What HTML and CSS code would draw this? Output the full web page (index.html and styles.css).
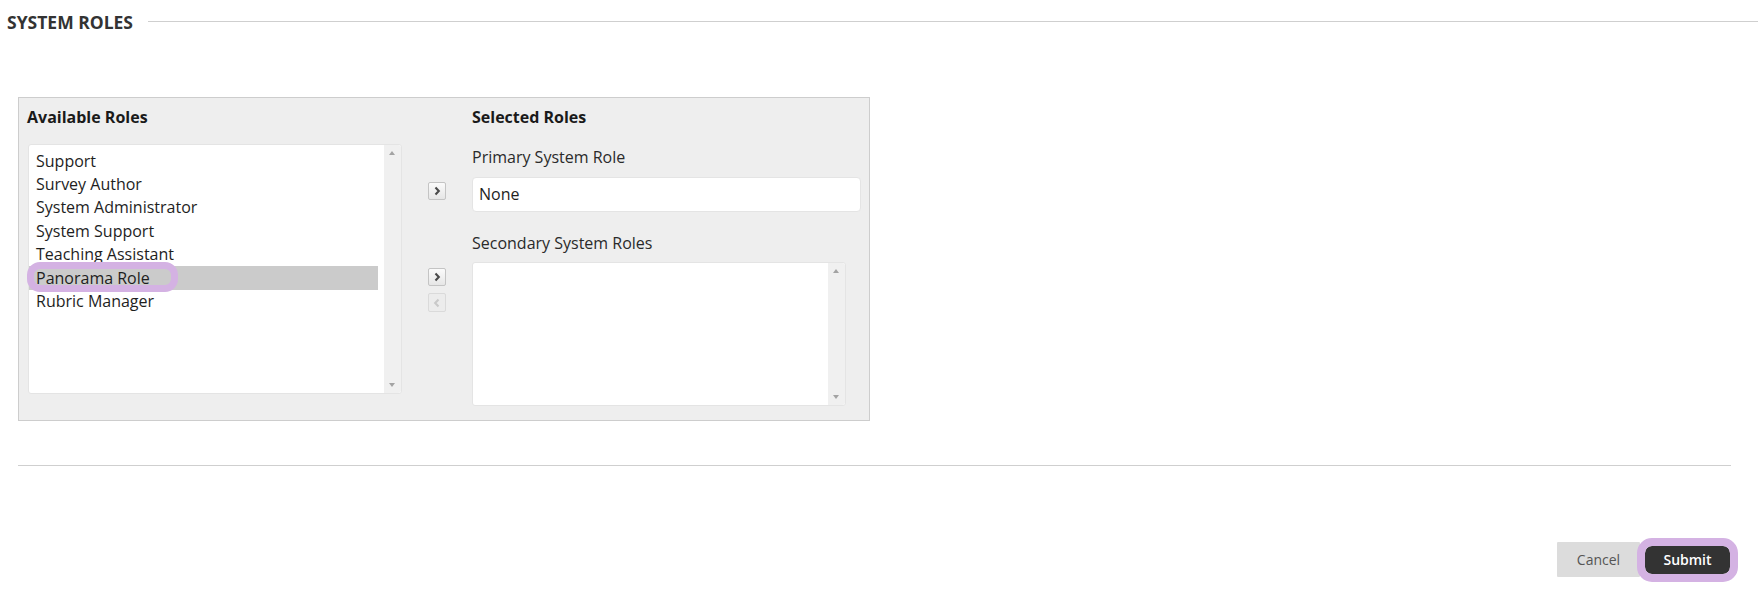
FILE: index.html
```html
<!DOCTYPE html>
<html>
<head>
<meta charset="utf-8">
<link rel="stylesheet" href="styles.css">
</head>
<body>
<div class="section-head">
  <h2 class="section-title">SYSTEM ROLES</h2>
  <div class="section-rule"></div>
</div>

<div class="form">
  <div class="picker">
    <div class="col-left">
      <h3 class="col-title">Available Roles</h3>
      <div class="listbox listbox-avail">
        <ul class="items">
          <li class="item">Support</li>
          <li class="item">Survey Author</li>
          <li class="item">System Administrator</li>
          <li class="item">System Support</li>
          <li class="item">Teaching Assistant</li>
          <li class="item item-selected">Panorama Role<span class="ring ring-item"></span></li>
          <li class="item">Rubric Manager</li>
        </ul>
        <div class="scrollbar">
          <span class="tri tri-up"></span>
          <span class="tri tri-down"></span>
        </div>
      </div>
    </div>

    <div class="col-right">
      <div class="spacer"></div>
      <h3 class="col-title">Selected Roles</h3>

      <div class="spacer"></div>
      <div class="field-label label-primary">Primary System Role</div>

      <div class="arrows arrows-primary">
        <span class="arrow-btn"><svg width="10" height="10" viewBox="0 0 10 10"><path d="M3.5 1.6 L6.8 5 L3.5 8.4" fill="none" stroke="#4a4a4a" stroke-width="2.1"/></svg></span>
      </div>
      <div class="input-box">None</div>

      <div class="spacer"></div>
      <div class="field-label label-secondary">Secondary System Roles</div>

      <div class="arrows arrows-secondary">
        <span class="arrow-btn"><svg width="10" height="10" viewBox="0 0 10 10"><path d="M3.5 1.6 L6.8 5 L3.5 8.4" fill="none" stroke="#4a4a4a" stroke-width="2.1"/></svg></span>
        <span class="arrow-btn arrow-disabled"><svg width="10" height="10" viewBox="0 0 10 10"><path d="M6.5 1.6 L3.2 5 L6.5 8.4" fill="none" stroke="#c9c9c9" stroke-width="2.1"/></svg></span>
      </div>
      <div class="listbox listbox-secondary">
        <ul class="items"></ul>
        <div class="scrollbar">
          <span class="tri tri-up"></span>
          <span class="tri tri-down"></span>
        </div>
      </div>
    </div>
  </div>

  <div class="form-rule"></div>

  <div class="actions">
    <button class="btn btn-cancel">Cancel</button>
    <button class="btn btn-submit">Submit</button>
  </div>
</div>
</body>
</html>
```

FILE: styles.css
```css
* { box-sizing: border-box; }
html, body { margin: 0; padding: 0; background: #fff; }
body {
  font-family: "Open Sans", "Noto Sans", sans-serif;
  color: #262626;
  width: 1758px;
  height: 596px;
  overflow: hidden;
}

.section-head {
  display: flex;
  align-items: center;
  padding: 10px 0 0 7px;
}
.section-title {
  margin: 0;
  font-size: 17.5px;
  line-height: 24px;
  font-weight: 700;
  color: #333;
}
.section-rule {
  flex: 1;
  height: 1px;
  background: #cfcfcf;
  margin-left: 15px;
  margin-top: -2px;
}

.form {
  margin: 63px 27px 0 18px;
}

.picker {
  width: 852px;
  height: 324px;
  background: #eee;
  border: 1px solid #cdcdcd;
  display: flex;
  padding: 8px 0 0 8px;
}

.col-left {
  width: 375px;
  display: flex;
  flex-direction: column;
}
.col-title {
  margin: 0;
  font-size: 16px;
  line-height: 22px;
  font-weight: 700;
  color: #1a1a1a;
}

.listbox {
  background: #fff;
  border: 1px solid #e4e4e4;
  border-radius: 3px;
  display: flex;
  flex-shrink: 0;
}
.listbox-avail {
  margin-top: 16px;
  margin-left: 1px;
  width: 374px;
  height: 250px;
}
.items {
  list-style: none;
  margin: 0;
  padding: 5px 6px 0 0;
  flex: 1;
}
.item {
  position: relative;
  font-size: 16px;
  line-height: 23.2px;
  height: 23.2px;
  padding-left: 7px;
  color: #1e1e1e;
  white-space: nowrap;
}
.item-selected {
  background: #cbcbcb;
  height: 24px;
  line-height: 24px;
}
.ring {
  position: absolute;
  border: 7px solid #d4b2e3;
  pointer-events: none;
}
.ring-item {
  left: -2px;
  top: -4px;
  width: 151px;
  height: 30px;
  border-radius: 13px;
}

.scrollbar {
  width: 17px;
  background: #f0f0f0;
  position: relative;
  border-radius: 0 3px 3px 0;
}
.tri {
  position: absolute;
  left: 5px;
  width: 0;
  height: 0;
  border-left: 3.5px solid transparent;
  border-right: 3.5px solid transparent;
}
.tri-up { top: 6px; border-bottom: 4px solid #a3a3a3; }
.tri-down { bottom: 6px; border-top: 4px solid #a3a3a3; }

.col-right {
  margin-left: 26px;
  display: grid;
  grid-template-columns: 18px 389px;
  column-gap: 26px;
  align-content: start;
}
.field-label {
  font-size: 16px;
  line-height: 22px;
  color: #2a2a2a;
}
.label-primary { margin-top: 18px; }
.label-secondary { margin-top: 20px; }

.arrows {
  display: flex;
  flex-direction: column;
  gap: 7px;
}
.arrows-primary { padding-top: 5px; margin-top: 9px; }
.arrows-secondary { padding-top: 6px; margin-top: 8px; }

.arrow-btn {
  width: 18px;
  height: 18px;
  border: 1px solid #c4c4c4;
  border-radius: 2px;
  background: linear-gradient(#fbfbfb, #e6e6e6);
  display: flex;
  align-items: center;
  justify-content: center;
}
.arrow-disabled {
  border-color: #dadada;
  background: #ececec;
  height: 19px;
}

.input-box {
  margin-top: 9px;
  height: 35px;
  background: #fff;
  border: 1px solid #e4e4e4;
  border-radius: 4px;
  font-size: 16px;
  line-height: 33px;
  padding-left: 6px;
  color: #1e1e1e;
}

.listbox-secondary {
  margin-top: 8px;
  width: 374px;
  height: 144px;
}

.form-rule {
  margin-top: 44px;
  height: 1px;
  background: #cfcfcf;
}

.actions {
  display: flex;
  justify-content: flex-end;
  align-items: center;
  gap: 5px;
  margin-top: 76px;
  padding-right: 1px;
}
.btn {
  font-family: "Open Sans", "Noto Sans", sans-serif;
  font-size: 14px;
  border: none;
  margin: 0;
  cursor: pointer;
}
.btn-cancel {
  width: 83px;
  height: 35px;
  background: #dcdcdc;
  color: #555;
  border-radius: 1px;
}
.btn-submit {
  width: 85px;
  height: 28px;
  background: #333;
  color: #fff;
  font-weight: 600;
  border-radius: 7px;
  outline: 8px solid #d4b2e3;
  outline-offset: 0;
}
```
